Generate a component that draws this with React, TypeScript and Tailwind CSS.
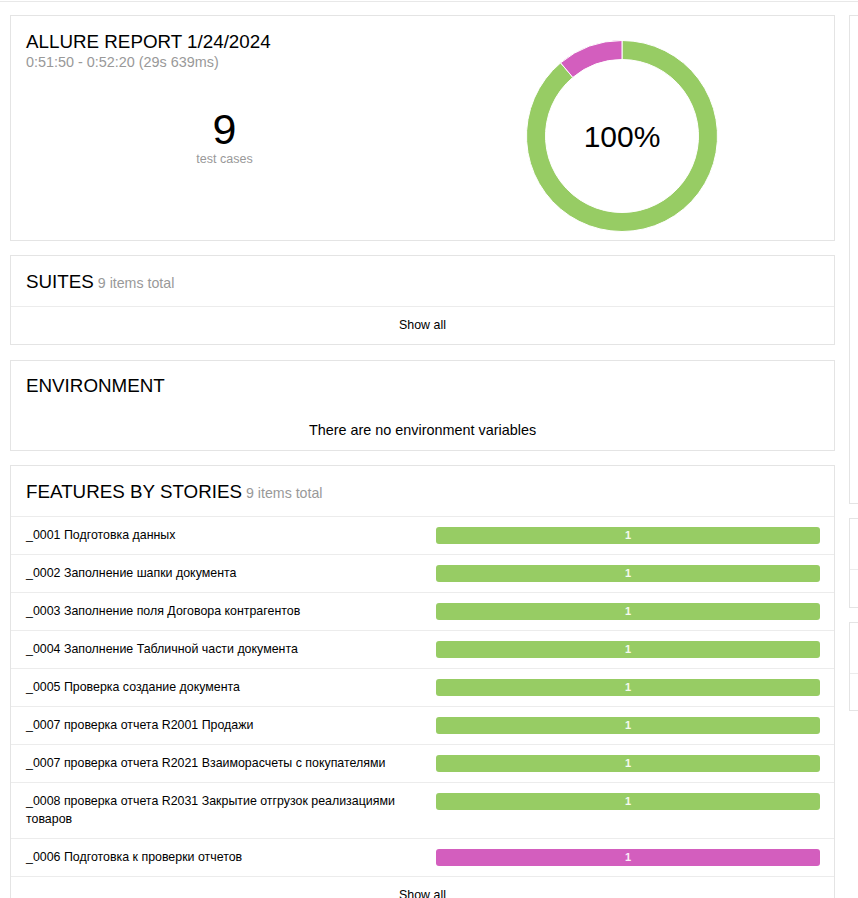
import React from 'react'

const font = { fontFamily: '"Liberation Sans", Arial, sans-serif' }

const stories = [
  { name: '_0001 Подготовка данных', status: 'passed' as const },
  { name: '_0002 Заполнение шапки документа', status: 'passed' as const },
  { name: '_0003 Заполнение поля Договора контрагентов', status: 'passed' as const },
  { name: '_0004 Заполнение Табличной части документа', status: 'passed' as const },
  { name: '_0005 Проверка создание документа', status: 'passed' as const },
  { name: '_0007 проверка отчета R2001 Продажи', status: 'passed' as const },
  { name: '_0007 проверка отчета R2021 Взаиморасчеты с покупателями', status: 'passed' as const },
  { name: '_0008 проверка отчета R2031 Закрытие отгрузок реализациями товаров', status: 'passed' as const },
  { name: '_0006 Подготовка к проверки отчетов', status: 'failed' as const },
]

// annular sector, angles in degrees clockwise from 12 o'clock
function sector(cx: number, cy: number, r1: number, r2: number, a0: number, a1: number) {
  const p = (r: number, a: number) => {
    const t = (a * Math.PI) / 180
    return `${(cx + r * Math.sin(t)).toFixed(2)} ${(cy - r * Math.cos(t)).toFixed(2)}`
  }
  const large = a1 - a0 > 180 ? 1 : 0
  return [
    `M ${p(r2, a0)}`,
    `A ${r2} ${r2} 0 ${large} 1 ${p(r2, a1)}`,
    `L ${p(r1, a1)}`,
    `A ${r1} ${r1} 0 ${large} 0 ${p(r1, a0)}`,
    'Z',
  ].join(' ')
}

function Donut() {
  return (
    <svg width="192" height="192" viewBox="0 0 192 192">
      <path d={sector(96, 96, 76.5, 95.5, 0, 320)} fill="#97cc64" stroke="#fff" strokeWidth="1" />
      <path d={sector(96, 96, 76.5, 95.5, 320, 360)} fill="#d35ebe" stroke="#fff" strokeWidth="1" />
      <text x="96" y="107" textAnchor="middle" fontSize="30" fill="#000" style={font}>
        100%
      </text>
    </svg>
  )
}

function CardTitle({ title, count }: { title: string; count?: string }) {
  return (
    <div className="h-[51px] px-[15px] pt-[15px] border-b border-[#ececec] text-[18.8px] leading-[21px] text-black whitespace-nowrap">
      {title}
      {count && <span className="text-[14.2px] leading-[14px] text-[#999]"> {count}</span>}
    </div>
  )
}

function StoryRow({ name, status }: { name: string; status: 'passed' | 'failed' }) {
  const color = status === 'failed' ? 'bg-[#d35ebe]' : 'bg-[#97cc64]'
  return (
    <div className="flex items-start pl-[15px] pr-[14px] border-b border-[#ececec]">
      <div className="w-[410px] pr-[12px] pt-[9px] pb-[10px] text-[12.4px] leading-[18px] text-black">{name}</div>
      <div
        className={`flex-1 mt-[10px] h-[17px] rounded-[3px] ${color} flex items-center justify-center text-[11px] font-bold text-white/90`}
      >
        1
      </div>
    </div>
  )
}

export default function App() {
  return (
    <div className="w-[858px] h-[898px] overflow-hidden bg-white" style={font}>
      <div className="h-[2px] border-b border-[#e8e8e8]" />
      <div className="flex gap-[14px] pl-[10px] pt-[13px]">
        <div className="w-[825px] shrink-0 flex flex-col gap-[14px]">
          {/* summary */}
          <div className="h-[226px] border border-[#e4e4e4] flex pl-[15px] pr-[14px] pt-[15px]">
            <div className="w-[397px] flex flex-col">
              <div className="text-[18.8px] leading-[21px] text-black">ALLURE REPORT 1/24/2024</div>
              <div className="text-[14.4px] leading-[20px] text-[#999]">0:51:50 - 0:52:20 (29s 639ms)</div>
              <div className="mt-[36px] flex flex-col items-center">
                <div className="text-[43px] leading-[43px] text-black">9</div>
                <div className="text-[12.5px] leading-[16px] text-[#999]">test cases</div>
              </div>
            </div>
            <div className="flex-1 flex justify-center">
              <div className="mt-[9px]">
                <Donut />
              </div>
            </div>
          </div>

          {/* suites */}
          <div className="border border-[#e4e4e4]">
            <CardTitle title="SUITES" count="9 items total" />
            <div className="h-[37px] pt-[10px] text-center text-[12.4px] leading-[17px] text-black">Show all</div>
          </div>

          {/* environment */}
          <div className="mt-[1px] h-[91px] border border-[#e4e4e4] px-[15px] pt-[14px]">
            <div className="text-[18.8px] leading-[21px] text-black">ENVIRONMENT</div>
            <div className="mt-[24px] text-center text-[14.4px] leading-[20px] text-black">
              There are no environment variables
            </div>
          </div>

          {/* features by stories */}
          <div className="border border-[#e4e4e4]">
            <CardTitle title="FEATURES BY STORIES" count="9 items total" />
            {stories.map((s, i) => (
              <StoryRow key={i} name={s.name} status={s.status} />
            ))}
            <div className="h-[38px] pt-[10px] text-center text-[12.4px] leading-[17px] text-black">Show all</div>
          </div>
        </div>

        <div className="w-[400px] shrink-0 flex flex-col gap-[14px]">
          <div className="h-[489px] border border-[#e4e4e4]" />
          <div className="border border-[#e4e4e4]">
            <div className="h-[51px] border-b border-[#ececec]" />
            <div className="h-[37px]" />
          </div>
          <div className="border border-[#e4e4e4]">
            <div className="h-[51px] border-b border-[#ececec]" />
            <div className="h-[36px]" />
          </div>
        </div>
      </div>
    </div>
  )
}
